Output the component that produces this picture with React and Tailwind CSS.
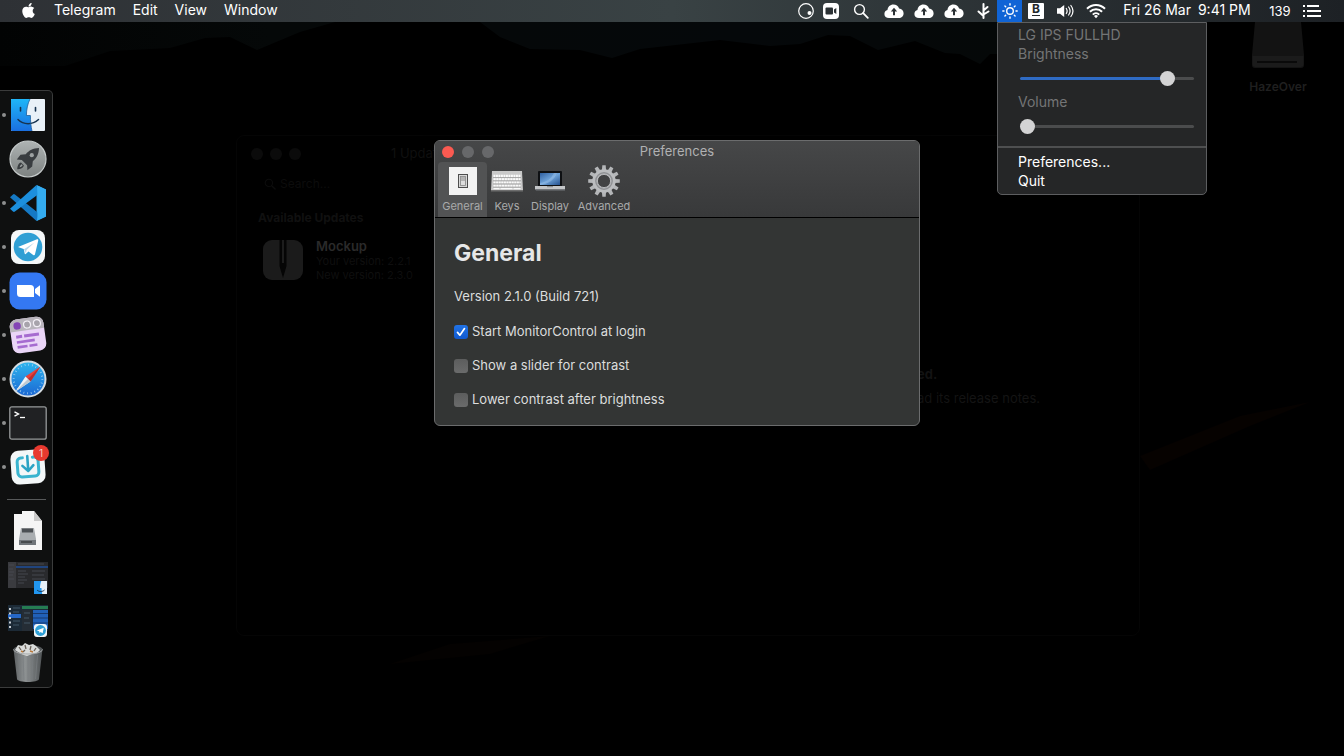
import React, { useState } from "react";
import { FaApple } from "react-icons/fa";

/* ---------- menu bar icons ---------- */

const CloudUp = () => (
  <svg width="20" height="14" viewBox="0 0 20 14" aria-hidden="true">
    <path d="M5 14C2.2 14 .4 12.300.4 9.900.4 7.900 1.700 6.400 3.500 6 3.600 2.800 6.200.4 9.400.4c2.700 0 4.900 1.600 5.700 4C17.700 4.500 19.600 6.500 19.600 9.200c0 2.800-2 4.800-4.800 4.800z" fill="#fff" />
    <path d="M10 3.800 13.200 7.400H11v3.800H9V7.400H6.800z" fill="#2b3134" />
  </svg>
);

const CircleDot = () => (
  <svg width="18" height="18" viewBox="0 0 18 18" aria-hidden="true">
    <circle cx="9" cy="9" r="7.300" fill="none" stroke="#fff" strokeWidth="1.200" />
    <circle cx="12.500" cy="11" r="2" fill="#fff" />
  </svg>
);

const CameraSquare = () => (
  <svg width="16" height="16" viewBox="0 0 16 16" aria-hidden="true">
    <rect x="0" y="0" width="16" height="16" rx="4" fill="#fff" />
    <rect x="2.500" y="4.500" width="7.500" height="7" rx="1" fill="#2b3134" />
    <path d="M11 6.500 13.300 5v6L11 9.500z" fill="#2b3134" />
  </svg>
);

const Magnifier = ({ size = 16, color = "#fff" }) => (
  <svg width={size} height={size} viewBox="0 0 16 16" aria-hidden="true">
    <circle cx="6.500" cy="6.500" r="4.900" fill="none" stroke={color} strokeWidth="1.400" />
    <path d="m10.200 10.200 4.600 4.600" stroke={color} strokeWidth="1.800" strokeLinecap="round" />
  </svg>
);

const Branch = () => (
  <svg width="14" height="16" viewBox="0 0 14 16" fill="none" stroke="#fff" strokeWidth="2" strokeLinecap="round" aria-hidden="true">
    <path d="M7.500 1v14M7.500 13 2.500 8.500M7.500 11.500 12.500 8.500M7.500 7.500 11.500 4" />
  </svg>
);

const Sun = () => (
  <svg width="18" height="18" viewBox="0 0 18 18" fill="none" stroke="#fff" strokeWidth="1.400" strokeLinecap="round" aria-hidden="true">
    <circle cx="9" cy="9" r="3.300" />
    <path d="M9 1.800v1.200M9 15v1.200M1.800 9h1.200M15 9h1.200M3.900 3.900l.8.800M13.300 13.300l.8.800M3.900 14.100l.8-.8M13.300 4.700l.8-.8" />
  </svg>
);

const Speaker = () => (
  <svg width="18" height="16" viewBox="0 0 18 16" aria-hidden="true">
    <path d="M1 5.300h3L8.200 2v12L4 10.700H1z" fill="#fff" />
    <path d="M10.300 5.500c1 1.500 1 3.500 0 5M12.600 4c1.800 2.400 1.800 5.600 0 8M14.900 2.500c2.500 3.300 2.500 7.700 0 11" fill="none" stroke="#fff" strokeWidth="1.200" strokeLinecap="round" />
  </svg>
);

const Wifi = () => (
  <svg width="20" height="16" viewBox="0 0 20 16" fill="none" stroke="#fff" strokeWidth="2" aria-hidden="true">
    <path d="M1 5.800C6 .7 14 .7 19 5.800M3.900 8.800c3.400-3.400 8.800-3.400 12.200 0M6.800 11.600c1.800-1.800 4.600-1.800 6.400 0" />
    <path d="M8 13a2.900 2.900 0 0 1 4 0l-2 2.200z" fill="#fff" stroke="none" />
  </svg>
);

const ListIcon = () => (
  <svg width="18" height="14" viewBox="0 0 18 14" fill="#fff" aria-hidden="true">
    <path d="M0 1h2v2H0zM4 1h12v2H4zM0 6h2v2H0zM4 6h14v2H4zM0 11h2v2H0zM4 11h14v2H4z" />
  </svg>
);

/* ---------- dock icons ---------- */

const Finder = ({ size = 36 }) => (
  <svg width={size} height={size} viewBox="0 0 36 36" aria-hidden="true">
    <defs>
      <linearGradient id="finderBlue" x1="0" y1="0" x2="0" y2="1">
        <stop offset="0" stopColor="#1fb6f8" />
        <stop offset="1" stopColor="#1a6fe0" />
      </linearGradient>
    </defs>
    <rect x="1" y="2" width="34" height="32" rx="1" fill="#e9f1f8" />
    <path d="M1 3a1 1 0 0 1 1-1h18c-2.500 5-3.500 10.500-3.600 16.500h4c0 5.500.4 10.500 1.600 15.500H2a1 1 0 0 1-1-1z" fill="url(#finderBlue)" />
    <path d="M10.500 10.500v3.500M25.500 10.500v3.500" stroke="#17334f" strokeWidth="1.600" strokeLinecap="round" />
    <path d="M8 22.500c5.500 5.500 14.500 5.500 20.500 0" fill="none" stroke="#17334f" strokeWidth="1.500" strokeLinecap="round" />
    <path d="M20 2c-2.500 5-3.500 10.500-3.600 16.500h4c0 5.500.4 10.500 1.600 15.500" fill="none" stroke="#1c5e9c" strokeWidth=".8" />
  </svg>
);

const Launchpad = () => (
  <svg width="38" height="38" viewBox="0 0 38 38" aria-hidden="true">
    <defs>
      <linearGradient id="launchDisc" x1="0" y1="0" x2="0" y2="1">
        <stop offset="0" stopColor="#aeb3b3" />
        <stop offset="1" stopColor="#7d8281" />
      </linearGradient>
    </defs>
    <circle cx="19" cy="19" r="18" fill="url(#launchDisc)" stroke="#c5caca" strokeWidth="1.200" />
    <path d="M30 8c-6 .2-10 2.400-13.200 6.200l-5.300.6-3.700 4.800 5 .3 5.300 5.300.3 5 4.800-3.700.6-5.300C27.600 18 29.800 14 30 8z" fill="#393d40" />
    <circle cx="22.800" cy="15.200" r="2.100" fill="#9da2a2" />
    <path d="M12 22.500c-2.500.5-3.500 3.500-3.800 6.700 3.200-.3 6.200-1.300 6.700-3.800z" fill="#393d40" />
    <path d="M12.700 24.300c-1.200.5-1.700 1.700-2 2.900 1.200-.3 2.400-.8 2.900-2z" fill="#9da2a2" />
  </svg>
);

const VSCode = () => (
  <svg width="38" height="38" viewBox="0 0 38 38" aria-hidden="true">
    <path d="M27.500 1 37 5.500v27L27.500 37z" fill="#2ba2ea" />
    <path d="M1 13.300 4 10.500a1.500 1.500 0 0 1 1.900 0L30 29.500 27.500 37z" fill="#1579c4" />
    <path d="M1 24.700 4 27.500a1.500 1.500 0 0 0 1.900 0L29 10.500 27.500 1z" fill="#1c8fdd" />
    <path d="M27.500 1 37 5.500v27L27.500 37c.9-.4.9-1 .9-1.700V2.700c0-.7 0-1.300-.9-1.700z" fill="#34acf0" />
  </svg>
);

const Telegram = () => (
  <svg width="36" height="36" viewBox="0 0 36 36" aria-hidden="true">
    <rect x="1" y="1" width="34" height="34" rx="8" fill="#f4f7f8" />
    <circle cx="18" cy="18" r="14.300" fill="#2f9fd4" />
    <path d="M8 18 27 10.300c.9-.3 1.500.2 1.200 1.400L25 25.300c-.2 1-.9 1.200-1.800.7l-4.700-3.500-2.500 2.300c-.8.700-1.300.3-1.400-.5L13.700 20z" fill="#fff" />
    <path d="m14 20.200 10.500-6.800-8 7.600-.5 3.300z" fill="#b6d7ea" />
  </svg>
);

const Zoom = () => (
  <svg width="38" height="38" viewBox="0 0 38 38" aria-hidden="true">
    <rect x=".5" y=".5" width="37" height="37" rx="10" fill="#3478f2" />
    <path d="M8 13h13.500a3.500 3.500 0 0 1 3.500 3.500V25H11.500A3.500 3.500 0 0 1 8 21.500zM26 17l5-3.700v11.400L26 21z" fill="#fff" />
  </svg>
);

const Taskboard = () => (
  <svg width="38" height="38" viewBox="0 0 38 38" aria-hidden="true">
    <g transform="rotate(-8 19 19)">
      <rect x="2" y="2" width="34" height="34" rx="7" fill="#ead5f7" />
      <path d="M2 14V9a7 7 0 0 1 7-7h20a7 7 0 0 1 7 7v5z" fill="#b9b5bd" />
      <circle cx="9.500" cy="8.500" r="3.700" fill="#8445b5" />
      <g fill="#a7a3ab" stroke="#f3eff6" strokeWidth="1.200">
        <circle cx="19.500" cy="8.500" r="3.500" />
        <circle cx="29.500" cy="8.500" r="3.500" />
      </g>
      <path d="M7 18h6v3H7zM15 18h15v3H15zM7 23.500h18v2.600H7zM7 28.500h10v2.600H7zM19 28.500h8v2.600h-8z" fill="#a66bd0" />
    </g>
  </svg>
);

const Safari = () => (
  <svg width="38" height="38" viewBox="0 0 38 38" aria-hidden="true">
    <defs>
      <linearGradient id="safariDisc" x1="0" y1="0" x2="0" y2="1">
        <stop offset="0" stopColor="#2cb6ee" />
        <stop offset="1" stopColor="#1b66d3" />
      </linearGradient>
    </defs>
    <circle cx="19" cy="19" r="17.500" fill="url(#safariDisc)" stroke="#d6dde2" strokeWidth="2" />
    <circle cx="19" cy="19" r="14.300" fill="none" stroke="#a9d6f4" strokeWidth="2" strokeDasharray=".7 3.040" />
    <path d="M31.500 6.500 21.500 21.500 16.500 16.500z" fill="#e8413b" />
    <path d="M6.500 31.500 16.500 16.500 21.500 21.500z" fill="#f1f4f6" />
    <path d="M31.500 6.500 21.500 21.500 19 19z" fill="#b93030" />
    <path d="M6.500 31.500 19 19l2.500 2.500z" fill="#bec9d2" />
  </svg>
);

const Terminal = () => (
  <svg width="38" height="34" viewBox="0 0 38 34" aria-hidden="true">
    <rect x=".8" y=".8" width="36.400" height="32.400" rx="2" fill="#202123" stroke="#96999a" strokeWidth="1.300" />
    <path d="m5.500 5.800 4 2.200-4 2.200" fill="none" stroke="#fff" strokeWidth="1.400" />
    <path d="M11 11.500h5" stroke="#fff" strokeWidth="1.300" />
  </svg>
);

const Updater = () => (
  <svg width="38" height="38" viewBox="0 0 38 38" aria-hidden="true">
    <g transform="rotate(-4 19 19)">
      <rect x="2" y="2" width="34" height="34" rx="8" fill="#f3f7f8" />
      <path d="M14 9.500h-1.500a4 4 0 0 0-4 4v11a4 4 0 0 0 4 4h13a4 4 0 0 0 4-4v-11a4 4 0 0 0-4-4H24" fill="none" stroke="#39b4cf" strokeWidth="3" strokeLinecap="round" />
      <path d="M19 8v14.500M13.500 17.500 19 23l5.500-5.500" fill="none" stroke="#2ba3c4" strokeWidth="2.600" strokeLinecap="round" strokeLinejoin="round" />
    </g>
  </svg>
);

const DiskImage = () => (
  <svg width="30" height="40" viewBox="0 0 30 40" aria-hidden="true">
    <path d="M1 3h8V0h12l8 10v29H1z" fill="#f5f5f5" />
    <path d="M21 0v10h8z" fill="#c9c9c9" />
    <path d="M8 17h13l2 11v6H6v-6z" fill="#a9adb0" />
    <path d="M9 17.500h11v4H9z" fill="#4c5054" />
    <path d="M6 29h17v5H6z" fill="#70757a" />
    <path d="M8 31h11" stroke="#2c2f32" strokeWidth="1.200" />
  </svg>
);

const FinderThumb = () => (
  <svg width="40" height="38" viewBox="0 -6 40 38" aria-hidden="true">
    <rect width="40" height="26" fill="#292a2d" />
    <path d="M0 0h8v26H0z" fill="#3a3b3f" />
    <path d="M8 4h32v2H8z" fill="#20447d" />
    <path d="M1 3h5M1 7h4M1 10h5M1 13h4M1 17h5M10 2h26M10 9h8M10 12h10M10 15h7M10 18h9M10 21h6M24 9h13M24 13h12M24 17h13" stroke="#484b52" strokeWidth=".9" />
    <g transform="translate(26 19)">
      <rect width="13" height="13" fill="#e7f0f8" />
      <path d="M0 0h7.300C6.300 2.500 6 5 6 7h1.500c0 2 .2 4 .7 6H0z" fill="#2196ef" />
      <path d="M3 9c2 2 5.500 2 7.500 0" stroke="#17334f" fill="none" />
    </g>
  </svg>
);

const TelegramThumb = () => (
  <svg width="40" height="40" viewBox="0 -6 40 40" aria-hidden="true">
    <rect width="40" height="26" fill="#1c2a36" />
    <path d="M14 1h26v3H14z" fill="#257c52" />
    <path d="M0 9h13v4H0z" fill="#2667c4" />
    <path d="M25 5h15v19H25z" fill="#2161b8" />
    <path d="M25 8.500h15M25 13h15M25 18h15" stroke="#163a70" />
    <path d="M14 5h10v21H14z" fill="#252d35" />
    <path d="M2 3v21" stroke="#c6ccd2" strokeWidth="2" strokeDasharray="2 2.500" />
    <path d="M5 3h7M5 7h6M5 16h7M5 20h6M16 8h6M16 13h5M16 18h6" stroke="#4d6273" strokeWidth=".8" />
    <rect x="26" y="19" width="13" height="13" rx="3" fill="#f2f6f8" />
    <circle cx="32.500" cy="25.500" r="5.400" fill="#2fa0d6" />
    <path d="m28.800 25.500 7-2.800-1.200 5.600-2-1.300-1 .9-.5-1.700z" fill="#fff" />
  </svg>
);

const Trash = () => (
  <svg width="32" height="40" viewBox="0 0 32 40" aria-hidden="true">
    <defs>
      <linearGradient id="trashBody">
        <stop offset="0" stopColor="#5c6062" />
        <stop offset=".4" stopColor="#8e9293" />
        <stop offset="1" stopColor="#4f5355" />
      </linearGradient>
    </defs>
    <path d="M1.500 6h29L27 36c-.4 4-21.600 4-22 0z" fill="url(#trashBody)" />
    <path d="M6.500 12 8.500 36M11 12l1 25M16 12v26M21 12l-1 25M25.500 12l-2 24" stroke="#797d7f" strokeWidth=".7" />
    <ellipse cx="16" cy="6.500" rx="14.500" ry="4.500" fill="#55595b" />
    <path d="m3 7 3-5 4 1 3-3 4 2 4-1 3 2 4 4-3 3-5 1-5 2-6-2z" fill="#d9dbda" />
    <path d="m7 4 2 3M13 2l1 4M19 3l-1 4M24 5l-2 3M11 9l2-2" stroke="#6b635a" strokeWidth="1.300" fill="none" />
    <path d="m18 8 3 1M9 8l2 1" stroke="#b8793c" strokeWidth="1.500" />
    <path d="M1.500 6.500c1 6 28 6 29 0" fill="none" stroke="#a5a8a9" strokeWidth="1" />
  </svg>
);

/* ---------- preference toolbar icons ---------- */

const SwitchIcon = () => (
  <svg width="28" height="28" viewBox="0 0 28 28" aria-hidden="true">
    <rect width="28" height="28" fill="#f2f2f2" />
    <rect x="9.500" y="7.500" width="9" height="13" fill="#d8d8d8" stroke="#4d4d4d" />
    <rect x="11.500" y="9.500" width="5" height="9" fill="#b3b3b3" stroke="#8a8a8a" strokeWidth=".8" />
    <path d="M12 14h4v4h-4z" fill="#dedede" />
  </svg>
);

const KeyboardIcon = () => (
  <svg width="32" height="22" viewBox="0 0 32 22" aria-hidden="true">
    <path d="M1 1h30l1 19.500H0z" fill="#c9c9c9" />
    <path d="M0 20h32v1.500H0z" fill="#6e6e6e" />
    <g stroke="#fafafa" strokeWidth="2.400">
      <path d="M2.500 6h27" strokeDasharray="1.900 .6" />
      <path d="M2.500 9.200h27" strokeDasharray="2.200 .6" />
      <path d="M2.500 12.400h27" strokeDasharray="2 .6" />
      <path d="M2.500 15.600h27" strokeDasharray="2.200 .6" />
      <path d="M2.500 18.500h6M9.500 18.500h12M22.500 18.500h7" strokeWidth="1.600" />
    </g>
    <path d="M2 7.600h28M2 10.800h28M2 14h28M2 17.200h28" stroke="#868686" strokeWidth=".6" />
  </svg>
);

const LaptopIcon = () => (
  <svg width="30" height="20" viewBox="0 0 30 20" aria-hidden="true">
    <defs>
      <linearGradient id="laptopScreen" x1="0" y1="0" x2="1" y2="1">
        <stop offset="0" stopColor="#2f5f9f" />
        <stop offset=".5" stopColor="#6fa4da" />
        <stop offset="1" stopColor="#24508e" />
      </linearGradient>
    </defs>
    <rect x="3" width="24" height="16" rx="1" fill="#0e1013" />
    <rect x="5" y="2" width="20" height="12" fill="url(#laptopScreen)" />
    <path d="M5 12c7-1 11-4 14-10h3c-3 7-8 11-17 12z" fill="#a0c4ea" opacity=".45" />
    <path d="M0 15h30v3.500H0z" fill="#c4c6c8" />
    <path d="M0 18h30v1.500H1z" fill="#73767a" />
    <path d="M12 15h6v1.200h-6z" fill="#8d9093" />
  </svg>
);

const TEETH = [0, 30, 60, 90, 120, 150, 180, 210, 240, 270, 300, 330];

const GearIcon = () => (
  <svg width="32" height="32" viewBox="0 0 32 32" aria-hidden="true">
    <g fill="#b4b6b8">
      {TEETH.map((a) => (
        <path key={a} d="M13.900 5.500 14.300.2h3.400l.4 5.300z" transform={`rotate(${a} 16 16)`} />
      ))}
    </g>
    <circle cx="16" cy="16" r="9.200" fill="none" stroke="#bbbdbf" strokeWidth="5" />
    <circle cx="16" cy="16" r="8.200" fill="none" stroke="#8f9194" strokeWidth="1.400" />
    <circle cx="16" cy="16" r="6.600" fill="#414243" stroke="#cdced0" strokeWidth=".8" />
  </svg>
);

/* ---------- desktop ---------- */

const Wallpaper = () => (
  <svg className="absolute inset-0 h-full w-full" viewBox="0 0 1344 756" preserveAspectRatio="none" aria-hidden="true">
    <defs>
      <linearGradient id="sky" gradientUnits="userSpaceOnUse" x1="0" y1="0" x2="1344" y2="0">
        <stop offset="0" stopColor="#020303" />
        <stop offset=".2" stopColor="#050808" />
        <stop offset=".55" stopColor="#05080a" />
        <stop offset=".75" stopColor="#050808" />
        <stop offset="1" stopColor="#020303" />
      </linearGradient>
    </defs>
    <rect width="1344" height="756" fill="#000" />
    <path d="M0 22h335l-35 10-43 18-27-13-25 1-35 10-60 3-45 15H0z" fill="url(#sky)" />
    <path d="M480 22h720l-40 20-50 12H990l-10 10-20-10-15-1-30-12-37 9-28-14-22-1-28 9-30 2-50-6-80 9-28 9-32-8-50-1-30-12z" fill="url(#sky)" />
    <path d="M1140 456l100-40 70-14-60 24-100 44z" fill="#060200" />
    <path d="M390 664l60-20 100-8-60 18z" fill="#040201" />
  </svg>
);

function UpdaterWindow() {
  return (
    <section aria-label="Updates" className="absolute top-[135px] right-[204px] bottom-[120px] left-[236px] rounded-lg border border-[#050505] bg-black">
      <div className="flex h-9 items-center pl-[14px]">
        <div className="flex gap-[7px]">
          <i className="size-3 rounded-full bg-[#0b0b0b]" />
          <i className="size-3 rounded-full bg-[#0b0b0b]" />
          <i className="size-3 rounded-full bg-[#0b0b0b]" />
        </div>
        <p className="ml-[90px] text-[13px] text-[#101010]">1 Update</p>
      </div>
      <div className="flex justify-between">
        <div className="w-[200px] px-[21px]">
          <div className="flex h-6 items-center gap-1 pl-1.5 text-[12px] text-[#0c0c0c]">
            <Magnifier size={12} color="#0c0c0c" />
            <span>Search...</span>
          </div>
          <h2 className="mt-[14px] text-[12px] leading-4 font-bold whitespace-nowrap text-[#101010]">Available Updates</h2>
          <div className="mt-3 flex items-center gap-3">
            <svg className="ml-1 shrink-0" width="42" height="42" viewBox="0 0 42 42" aria-hidden="true">
              <rect x="1" y="1" width="40" height="40" rx="9" fill="#1b1b1b" />
              <path d="M17.500 1h7v26l-3.500 12-3.500-12z" fill="#050505" />
              <path d="M20 1h2v23h-2z" fill="#1d1d1d" />
            </svg>
            <div className="whitespace-nowrap">
              <p className="text-[13px] leading-4 font-semibold text-[#2a2a2a]">Mockup</p>
              <p className="text-[11px] leading-[14px] text-[#0f0f0f]">Your version: 2.2.1</p>
              <p className="text-[11px] leading-[14px] text-[#0f0f0f]">New version: 2.3.0</p>
            </div>
          </div>
        </div>
        <div className="mt-[194px] w-[222px] text-[#141414]">
          <p className="text-[13px] leading-4 font-bold">ed.</p>
          <p className="mt-2 text-[13px] leading-4">ad its release notes.</p>
        </div>
      </div>
    </section>
  );
}

const TABS = [
  { name: "General", width: "w-[49px]", Icon: SwitchIcon },
  { name: "Keys", width: "w-10", Icon: KeyboardIcon },
  { name: "Display", width: "w-[46px]", Icon: LaptopIcon },
  { name: "Advanced", width: "w-[62px]", Icon: GearIcon },
];

function CheckRow({ label, initial }) {
  const [on, setOn] = useState(initial);
  return (
    <label className="flex h-[34px] items-center gap-1">
      <span className="grid">
        <input
          type="checkbox"
          checked={on}
          onChange={() => setOn(!on)}
          className="col-start-1 row-start-1 size-[14px] appearance-none rounded-[3px] bg-linear-to-b from-[#5c5d5d] to-[#6a6b6b] checked:from-[#2173e6] checked:to-[#1059cf]"
        />
        {on && (
          <svg className="pointer-events-none col-start-1 row-start-1" width="14" height="14" viewBox="0 0 14 14" aria-hidden="true">
            <path d="m3.500 7.400 2.400 2.800 4.600-6.600" fill="none" stroke="#fff" strokeWidth="1.700" strokeLinecap="round" strokeLinejoin="round" />
          </svg>
        )}
      </span>
      {label}
    </label>
  );
}

function Preferences() {
  const [active, setActive] = useState("General");
  return (
    <section aria-label="Preferences" className="absolute top-[140px] left-[434px] w-[486px] overflow-hidden rounded-[6px] border border-[#6b6c6d] bg-[#333534] shadow-2xl">
      <header className="border-b border-black bg-linear-to-b from-[#464748] to-[#38393a]">
        <div className="grid h-[21px] grid-cols-[1fr_auto_1fr] items-center">
          <div className="flex gap-2 pl-[7px]">
            <button aria-label="Close" className="size-3 rounded-full bg-[#fb5a51]" />
            <button aria-label="Minimize" className="size-3 rounded-full bg-[#67686a]" />
            <button aria-label="Zoom" className="size-3 rounded-full bg-[#67686a]" />
          </div>
          <h1 className="text-[13px] text-[#b0b1b2]">Preferences</h1>
        </div>
        <nav className="flex pl-[3px]">
          {TABS.map(({ name, width, Icon }) => (
            <button
              key={name}
              onClick={() => setActive(name)}
              className={`flex h-[55px] flex-col items-center rounded-t-[4px] text-[11px] text-[#a9aaab] ${width} ${active === name ? "bg-[#525354]" : ""}`}
            >
              <span className="flex h-[38px] items-center">
                <Icon />
              </span>
              <span className="leading-[13px]">{name}</span>
            </button>
          ))}
        </nav>
      </header>
      <div className="px-[19px] pt-5 pb-2 text-[13px] text-[#dcdddd]">
        <h2 className="text-[23px] leading-[30px] font-bold text-[#e6e7e7]">General</h2>
        <p className="mt-[18px] mb-[9px] leading-5">Version 2.1.0 (Build 721)</p>
        <CheckRow label="Start MonitorControl at login" initial={true} />
        <CheckRow label="Show a slider for contrast" initial={false} />
        <CheckRow label="Lower contrast after brightness" initial={false} />
      </div>
    </section>
  );
}

function MenuSlider({ label, initial }) {
  const [value, setValue] = useState(initial);
  return (
    <label className="block text-[#747576]">
      <span className="block leading-[19px]">{label}</span>
      <span className="flex h-[29px] items-center pt-0.5 pr-3 pl-0.5">
        <input
          type="range"
          value={value}
          onChange={(e) => setValue(Number(e.target.value))}
          style={{ backgroundImage: `linear-gradient(to right, #2f6bc4 ${value}%, #4b4c4d ${value}%)` }}
          className="h-[3px] w-full appearance-none rounded-full [&::-webkit-slider-thumb]:size-[15px] [&::-webkit-slider-thumb]:appearance-none [&::-webkit-slider-thumb]:rounded-full [&::-webkit-slider-thumb]:bg-[#d3d3d4]"
        />
      </span>
    </label>
  );
}

function BrightnessMenu() {
  return (
    <div className="absolute top-full left-0 w-[210px] rounded-b-[5px] border border-[#5d5e60] bg-[#252627] text-[14px]">
      <div className="border-b-2 border-[#4e4f50] pt-0.5 pb-1.5 pl-5">
        <p className="leading-[19px] text-[#747576]">LG IPS FULLHD</p>
        <MenuSlider label="Brightness" initial={88} />
        <MenuSlider label="Volume" initial={0} />
      </div>
      <div className="flex flex-col items-start py-1 pl-5 text-white">
        <button className="leading-[19px]">Preferences...</button>
        <button className="leading-[19px]">Quit</button>
      </div>
    </div>
  );
}

function StatusItem({ width, label, children }) {
  return (
    <button aria-label={label} className={`flex h-full shrink-0 items-center justify-center ${width}`}>
      {children}
    </button>
  );
}

function MenuBar() {
  return (
    <header className="relative z-10 flex h-[22px] items-center justify-between bg-linear-to-r from-[#2e3135] via-[#394244] to-[#1d2125] pr-[18px] pl-5 text-[14px] leading-5 text-white">
      <nav className="flex h-full items-center pb-0.5">
        <button aria-label="Apple menu" className="mr-[17px]">
          <FaApple size={17} />
        </button>
        <div className="flex gap-[17px]">
          <button>Telegram</button>
          <button>Edit</button>
          <button>View</button>
          <button>Window</button>
        </div>
      </nav>
      <div className="flex h-full items-center">
        <StatusItem width="w-[26px]" label="Focus"><CircleDot /></StatusItem>
        <StatusItem width="w-6" label="Camera"><CameraSquare /></StatusItem>
        <StatusItem width="w-9" label="Search"><Magnifier /></StatusItem>
        <StatusItem width="w-[30px]" label="Upload one"><CloudUp /></StatusItem>
        <StatusItem width="w-[30px]" label="Upload two"><CloudUp /></StatusItem>
        <StatusItem width="w-[30px]" label="Upload three"><CloudUp /></StatusItem>
        <StatusItem width="w-7" label="Branch"><Branch /></StatusItem>
        <div className="relative h-full">
          <button aria-label="Display brightness" className="flex h-full w-[25px] items-center justify-center bg-[#1064d6]">
            <Sun />
          </button>
          <BrightnessMenu />
        </div>
        <StatusItem width="w-7" label="Keyboard layout">
          <span className="flex h-4 w-4 flex-col items-center rounded-[1px] bg-white text-[12px] leading-3 font-bold text-[#23282b]">
            B
            <i className="h-px w-2 bg-[#23282b]" />
          </span>
        </StatusItem>
        <StatusItem width="w-[30px]" label="Sound"><Speaker /></StatusItem>
        <StatusItem width="w-8" label="Wi-Fi"><Wifi /></StatusItem>
        <button className="flex w-[150px] justify-center gap-[7px] pb-0.5 whitespace-nowrap">
          <span>Fri 26 Mar</span>
          <span>9:41 PM</span>
        </button>
        <span className="w-9 text-center text-[13px]">139</span>
        <StatusItem width="w-7" label="Notification center"><ListIcon /></StatusItem>
      </div>
    </header>
  );
}

const APPS = [
  { name: "Finder", Icon: Finder, running: true },
  { name: "Launchpad", Icon: Launchpad },
  { name: "Code", Icon: VSCode, running: true },
  { name: "Telegram", Icon: Telegram, running: true },
  { name: "Zoom", Icon: Zoom, running: true },
  { name: "Taskboard", Icon: Taskboard, running: true },
  { name: "Safari", Icon: Safari, running: true },
  { name: "Terminal", Icon: Terminal, running: true },
  { name: "Updater", Icon: Updater, running: true, badge: "1" },
];

const SHELF = [
  { name: "Disk image", Icon: DiskImage },
  { name: "Finder window", Icon: FinderThumb },
  { name: "Telegram window", Icon: TelegramThumb },
  { name: "Trash", Icon: Trash },
];

function DockItem({ name, Icon, running, badge }) {
  return (
    <button aria-label={name} className="relative flex h-11 w-full items-center">
      <i className={`mx-0.5 size-1 shrink-0 rounded-full ${running ? "bg-[#8d8e8e]" : ""}`} />
      <span className="flex w-10 justify-center">
        <Icon />
      </span>
      {badge && (
        <span className="absolute top-0 right-[3px] flex size-4 items-center justify-center rounded-full bg-[#e8392f] text-[10px] text-[#f6c9c6]">{badge}</span>
      )}
    </button>
  );
}

function Dock() {
  return (
    <nav aria-label="Dock" className="flex w-[53px] flex-col rounded-r-[5px] border border-l-0 border-[#3b3c3c] bg-[#0f1010] pt-0.5 pb-0.5">
      {APPS.map((app) => (
        <DockItem key={app.name} {...app} />
      ))}
      <hr className="mt-[10px] mr-1.5 mb-[9px] ml-[7px] border-[#57595a]" />
      {SHELF.map((item) => (
        <DockItem key={item.name} {...item} />
      ))}
    </nav>
  );
}

export default function App() {
  return (
    <div className="relative flex min-h-screen flex-col overflow-hidden bg-black font-['Inter','Liberation_Sans',sans-serif]">
      <Wallpaper />
      <MenuBar />
      <figure className="absolute top-[22px] right-[26px] flex w-20 flex-col items-center">
        <svg width="54" height="47" viewBox="0 0 54 47" aria-hidden="true">
          <path d="M4 0h46l3 33v10a3 3 0 0 1-3 3H4a3 3 0 0 1-3-3V33z" fill="#131313" />
          <path d="M1.500 34h51v8a3 3 0 0 1-3 3h-45a3 3 0 0 1-3-3z" fill="#1b1b1b" />
          <path d="M6 40h40" stroke="#0a0a0a" strokeWidth="2" />
        </svg>
        <figcaption className="mt-[10px] text-[12px] leading-4 font-semibold text-[#1f1f1f]">HazeOver</figcaption>
      </figure>
      <UpdaterWindow />
      <Preferences />
      <main className="relative flex grow items-center">
        <Dock />
      </main>
    </div>
  );
}
